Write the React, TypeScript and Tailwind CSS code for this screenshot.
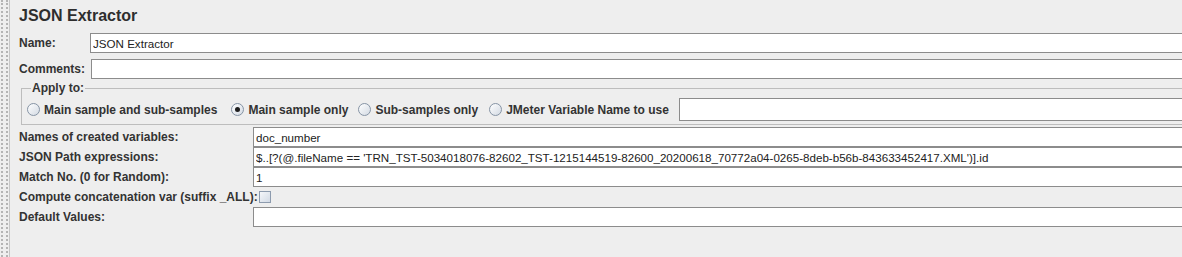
import React from "react";

const font = "font-['Liberation_Sans',Arial,sans-serif]";

function Field({ value = "" }: { value?: string }) {
  return (
    <input
      readOnly
      value={value}
      className="h-[20px] min-w-0 flex-1 border border-r-0 border-[#8c8c8c] bg-white px-[2px] text-[11.6px] text-[#222] outline-none"
    />
  );
}

function Radio({ label, checked = false }: { label: string; checked?: boolean }) {
  return (
    <label className="flex items-center gap-[4px] whitespace-nowrap">
      <span className="flex h-[13px] w-[13px] items-center justify-center rounded-full border border-[#8694a5] bg-linear-to-br from-white to-[#d3dae3]">
        {checked && <span className="h-[5px] w-[5px] rounded-full bg-[#1e1e1e]" />}
      </span>
      <span className="text-[12px] font-bold">{label}</span>
    </label>
  );
}

function Row({ label, value }: { label: string; value?: string }) {
  return (
    <div className="flex h-[20px] items-center">
      <span className="w-[234px] shrink-0 text-[12px] font-bold">{label}</span>
      <Field value={value} />
    </div>
  );
}

export default function App() {
  return (
    <div className={`flex h-[257px] w-[1182px] overflow-hidden bg-[#eeeeee] text-[#333] ${font}`}>
      {/* dotted splitter on the left */}
      <div className="flex w-[10px] shrink-0">
        <div className="ml-[1px] w-[7px] border-x-2 border-dotted border-[#b4b4b4]" />
        <div className="ml-[1px] w-[1px] bg-[#c6c6c6]" />
      </div>

      <div className="flex min-w-0 flex-1 flex-col pl-[9px]">
        <h1 className="mt-[7px] text-[16px] leading-[18px] font-bold text-[#2e2e2e]">JSON Extractor</h1>

        <div className="mt-[8px] flex h-[20px] items-center">
          <span className="w-[71px] shrink-0 text-[12px] font-bold">Name:</span>
          <Field value="JSON Extractor" />
        </div>

        <div className="mt-[6px] flex h-[20px] items-center">
          <span className="w-[72px] shrink-0 text-[12px] font-bold">Comments:</span>
          <Field />
        </div>

        <fieldset className="mt-[2px] ml-[2px] -mr-[6px] border border-[#bdbdbd] px-[5px] pt-[3px] pb-[3px]">
          <legend className="ml-[4px] px-[1px] text-[12px] leading-[14px] font-bold">Apply to:</legend>
          <div className="flex h-[23px] items-center">
            <Radio label="Main sample and sub-samples" />
            <div className="ml-[14px]">
              <Radio label="Main sample only" checked />
            </div>
            <div className="ml-[10px]">
              <Radio label="Sub-samples only" />
            </div>
            <div className="ml-[11px]">
              <Radio label="JMeter Variable Name to use" />
            </div>
            <input
              readOnly
              value=""
              className="ml-[10px] h-[23px] min-w-0 flex-1 border border-r-0 border-[#8c8c8c] bg-white outline-none"
            />
          </div>
        </fieldset>

        <div className="mt-[2px] flex flex-col">
          <Row label="Names of created variables:" value="doc_number" />
          <Row
            label="JSON Path expressions:"
            value="$..[?(@.fileName == 'TRN_TST-5034018076-82602_TST-1215144519-82600_20200618_70772a04-0265-8deb-b56b-843633452417.XML')].id"
          />
          <Row label="Match No. (0 for Random):" value="1" />
          <div className="flex h-[20px] items-center">
            <span className="whitespace-nowrap text-[12px] font-bold">Compute concatenation var (suffix _ALL):</span>
            <span className="ml-[1px] h-[12px] w-[12px] border border-[#8d9bae] bg-linear-to-br from-[#f5f7fa] to-[#d2dae5]" />
          </div>
          <Row label="Default Values:" />
        </div>
      </div>
    </div>
  );
}
